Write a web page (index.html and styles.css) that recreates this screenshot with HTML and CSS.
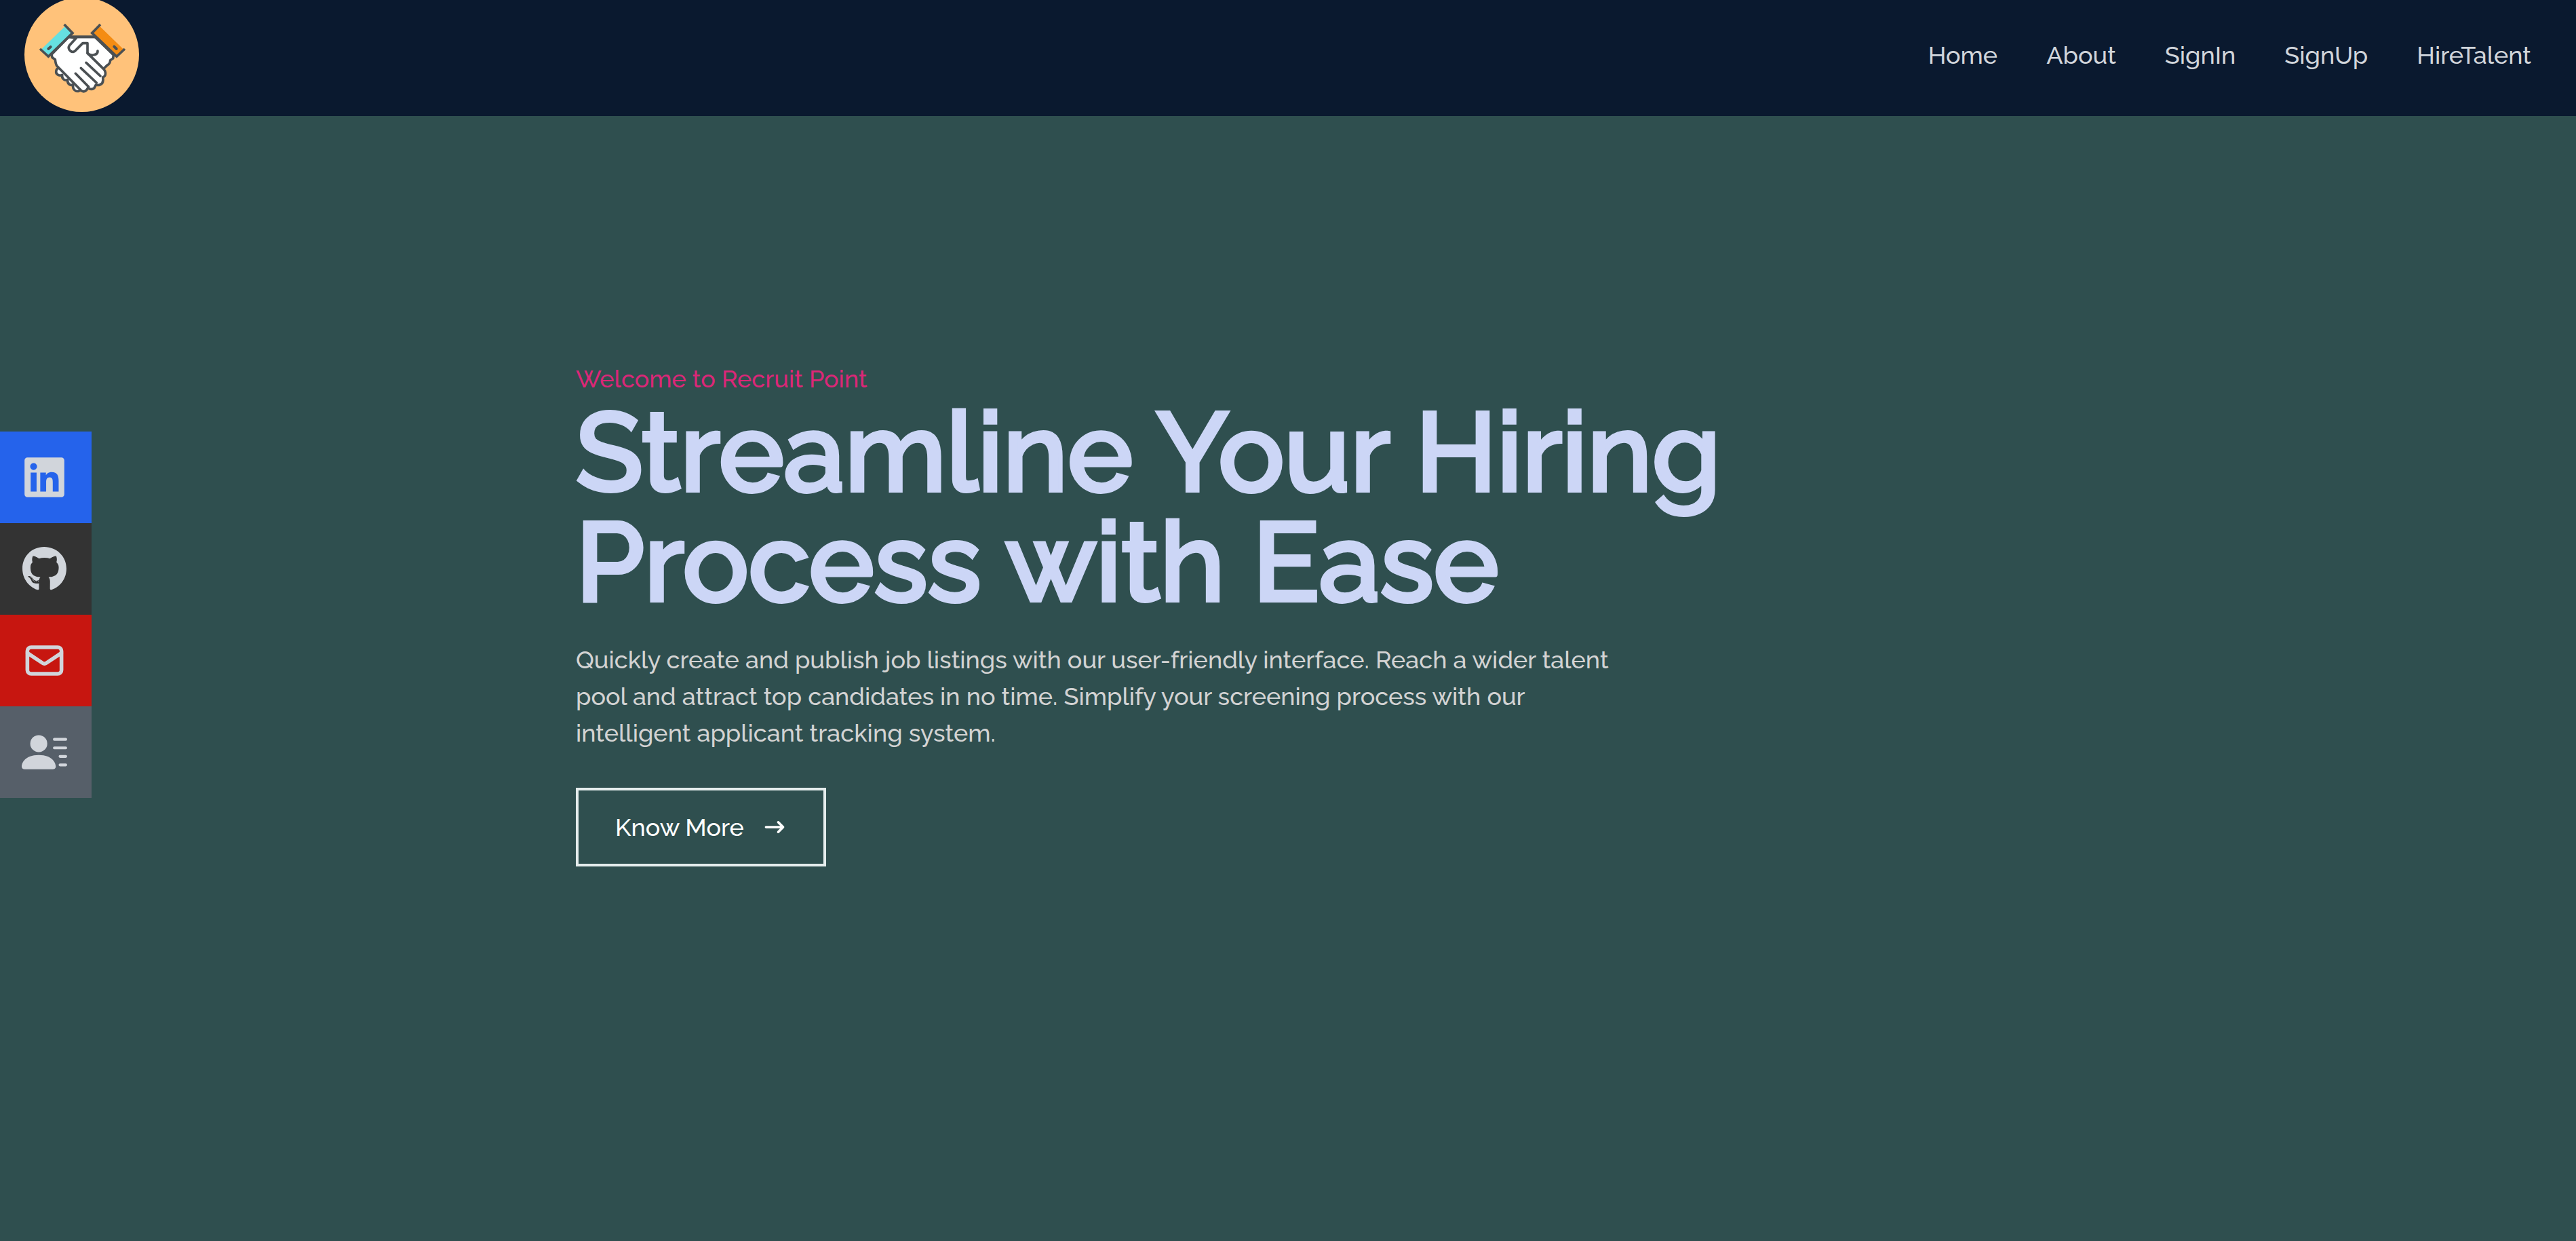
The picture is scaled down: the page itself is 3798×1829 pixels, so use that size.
FILE: index.html
```html
<!DOCTYPE html>
<html lang="en">
<head>
<meta charset="utf-8">
<meta name="viewport" content="width=device-width, initial-scale=1">
<title>Recruit Point</title>
<link rel="stylesheet" href="styles.css">
</head>
<body>
<header class="header">
  <a class="logo" href="#home" aria-label="Recruit Point">
    <svg viewBox="108 -12 507 507" aria-hidden="true">
      <circle cx="361.500" cy="241.500" r="253.500" fill="#ffc27a"/>
      <g stroke="#4b5053" stroke-width="11" stroke-linejoin="round" stroke-linecap="round">
        <g fill="#fff">
          <path d="M262 300 C246 302 243 325 257 331 C265 335 272 333 275 331 C272 348 287 359 299 352 C297 370 310 380 323 374 C320 394 333 406 347 403 L357 399 L372 380 L290 290 Z"/>
          <path d="M304 163 H420 L502 243 L500 258 L488 266 Q486 284 476 287 L459 303 L390 300 L270 230 Z"/>
          <path d="M304 163 L228 241 L231 254 L244 263 Q246 284 252 292 L357 398 Q370 411 383 398 L389 388 Q402 400 417 389 L424 375 Q440 380 452 368 Q458 358 455 342 Q469 336 466 320 Q465 313 458 305 L387 235 V191 H366 L337 220 Q325 236 311 225 Q299 214 307 201 L337 168 Z"/>
        </g>
        <path fill="none" d="M387 235 Q397 246 414 243 Q433 240 432 225 M381 277 L444 336 M358 301 L427 366 M334 325 L392 384"/>
        <path fill="none" stroke-linecap="butt" d="M304 163 H424"/>
      </g>
      <path fill="#66e0e1" d="M290 114 L322 146 L214 249 L182 219 Z"/>
      <path fill="#f48c13" d="M439 114 L547 219 L516 249 L406 146 Z"/>
      <path fill="none" stroke="#4b5053" stroke-width="11" stroke-linejoin="miter" d="M284 108 L321 146 L214 250 L177 216 M444 108 L407 146 L516 250 L552 216"/>
      <path fill="none" stroke="#4b5053" stroke-width="12" stroke-linecap="round" d="M214 216 L224 207 M505 206 L515 216"/>
    </svg>
  </a>
  <nav class="nav">
    <a href="#home">Home</a>
    <a href="#about">About</a>
    <a href="#signin">SignIn</a>
    <a href="#signup">SignUp</a>
    <a href="#hire">HireTalent</a>
  </nav>
</header>
<main class="main" id="home">
  <section class="hero">
    <p class="eyebrow">Welcome to Recruit Point</p>
    <h1 class="title">Streamline Your Hiring<br>Process with Ease</h1>
    <p class="lead">Quickly create and publish job listings with our user-friendly interface. Reach a wider talent pool and attract top candidates in no time. Simplify your screening process with our intelligent applicant tracking system.</p>
    <button class="more" type="button">Know More
      <svg viewBox="0 0 20 20" fill="currentColor" aria-hidden="true"><path fill-rule="evenodd" clip-rule="evenodd" d="M12.293 5.293a1 1 0 011.414 0l4 4a1 1 0 010 1.414l-4 4a1 1 0 01-1.414-1.414L14.586 11H3a1 1 0 110-2h11.586l-2.293-2.293a1 1 0 010-1.414z"/></svg>
    </button>
  </section>
  <aside class="social">
    <a class="linkedin" href="#linkedin" aria-label="LinkedIn">
      <svg viewBox="-32 0 512 512" fill="currentColor"><path d="M416 32H31.900C14.300 32 0 46.500 0 64.300v383.400C0 465.500 14.300 480 31.900 480H416c17.600 0 32-14.500 32-32.300V64.300c0-17.800-14.400-32.300-32-32.300zM135.400 416H69V202.200h66.500V416zm-33.200-243c-21.300 0-38.500-17.300-38.500-38.500S80.900 96 102.200 96c21.200 0 38.500 17.300 38.500 38.500 0 21.300-17.200 38.500-38.500 38.500zm282.100 243h-66.400V312c0-24.800-.5-56.700-34.500-56.700-34.600 0-39.900 27-39.900 54.900V416h-66.400V202.200h63.700v29.200h.9c8.900-16.800 30.600-34.500 62.900-34.500 67.200 0 79.700 44.300 79.700 101.900V416z"/></svg>
    </a>
    <a class="github" href="#github" aria-label="GitHub">
      <svg viewBox="-8 0 512 512" fill="currentColor"><path d="M165.900 397.400c0 2-2.300 3.600-5.200 3.600-3.300.3-5.600-1.300-5.600-3.600 0-2 2.300-3.600 5.200-3.600 3-.3 5.600 1.300 5.600 3.600zm-31.100-4.500c-.7 2 1.300 4.300 4.300 4.900 2.600 1 5.600 0 6.200-2s-1.300-4.300-4.300-5.200c-2.600-.7-5.500.3-6.200 2.300zm44.200-1.700c-2.900.7-4.900 2.600-4.600 4.900.3 2 2.900 3.300 5.900 2.600 2.900-.7 4.900-2.600 4.600-4.600-.3-1.900-3-3.200-5.900-2.900zM244.800 8C106.100 8 0 113.300 0 252c0 110.900 69.800 205.800 169.500 239.200 12.800 2.300 17.300-5.600 17.300-12.100 0-6.200-.3-40.400-.3-61.400 0 0-70 15-84.700-29.800 0 0-11.400-29.100-27.800-36.600 0 0-22.900-15.700 1.600-15.400 0 0 24.900 2 38.600 25.800 21.900 38.600 58.600 27.500 72.900 20.900 2.300-16 8.800-27.100 16-33.700-55.900-6.200-112.300-14.300-112.300-110.500 0-27.500 7.600-41.300 23.600-58.900-2.600-6.500-11.100-33.300 2.600-67.900 20.900-6.500 69 27 69 27 20-5.600 41.500-8.500 62.800-8.500s42.800 2.900 62.800 8.500c0 0 48.100-33.600 69-27 13.700 34.700 5.200 61.400 2.600 67.900 16 17.700 25.800 31.500 25.800 58.900 0 96.500-58.900 104.200-114.800 110.500 9.200 7.900 17 22.900 17 46.400 0 33.700-.3 75.400-.3 83.600 0 6.500 4.600 14.400 17.300 12.100C428.200 457.800 496 362.900 496 252 496 113.300 383.500 8 244.800 8zM97.200 352.900c-1.300 1-1 3.300.7 5.200 1.600 1.600 3.900 2.300 5.200 1 1.300-1 1-3.300-.7-5.200-1.600-1.600-3.900-2.300-5.200-1zm-10.800-8.100c-.7 1.300.3 2.900 2.300 3.900 1.600 1 3.600.7 4.300-.7.7-1.300-.3-2.900-2.300-3.900-2-.6-3.600-.3-4.300.7zm32.400 35.600c-1.600 1.300-1 4.300 1.300 6.200 2.300 2.300 5.200 2.600 6.500 1 1.300-1.300.7-4.300-1.300-6.200-2.200-2.300-5.200-2.600-6.500-1zm-11.400-14.700c-1.600 1-1.600 3.600 0 5.900 1.600 2.300 4.300 3.300 5.600 2.300 1.600-1.300 1.600-3.900 0-6.200-1.400-2.300-4-3.300-5.600-2z"/></svg>
    </a>
    <a class="mail" href="#mail" aria-label="Email">
      <svg viewBox="0 0 24 24" fill="none" stroke="currentColor" stroke-width="2" stroke-linecap="round" stroke-linejoin="round"><path d="M3 8l7.890 5.260a2 2 0 002.220 0L21 8M5 19h14a2 2 0 002-2V7a2 2 0 00-2-2H5a2 2 0 00-2 2v10a2 2 0 002 2z"/></svg>
    </a>
    <a class="resume" href="#resume" aria-label="Resume">
      <svg viewBox="0 0 16 16" fill="currentColor"><path d="M6 8a3 3 0 1 0 0-6 3 3 0 0 0 0 6zm-5 6s-1 0-1-1 1-4 6-4 6 3 6 4-1 1-1 1H1zM11 3.500a.5.5 0 0 1 .5-.5h4a.5.5 0 0 1 0 1h-4a.5.5 0 0 1-.5-.5zm.5 2.500a.5.5 0 0 0 0 1h4a.5.5 0 0 0 0-1h-4zm2 3a.5.5 0 0 0 0 1h2a.5.5 0 0 0 0-1h-2zm0 3a.5.5 0 0 0 0 1h2a.5.5 0 0 0 0-1h-2z"/></svg>
    </a>
  </aside>
</main>
</body>
</html>
```
FILE: styles.css
```css
* {
  box-sizing: border-box;
  margin: 0;
  padding: 0;
}

body {
  background: #2f4f4f;
  color: #d1d5db;
  font-family: Raleway, Lato, sans-serif;
  font-size: 36px;
  font-weight: 500;
  line-height: 54px;
}

a {
  color: inherit;
  text-decoration: none;
}

svg {
  display: block;
}

.header {
  display: flex;
  align-items: center;
  justify-content: space-between;
  height: 171px;
  padding: 0 66px 10px 36px;
  background: #0a192f;
}

.logo svg {
  width: 169px;
  height: 169px;
}

.nav {
  display: flex;
  gap: 72px;
}

.main {
  display: grid;
  align-items: center;
  min-height: calc(100vh - 171px);
  padding-bottom: 189px;
}

.hero,
.social {
  grid-area: 1 / 1;
}

.hero {
  width: 100%;
  max-width: 2100px;
  margin: 0 auto;
  padding-bottom: 4px;
}

.eyebrow {
  color: #db2777;
}

/* The medium cut thickened by an outline, so the letters keep its narrower set */
.title {
  color: #ccd6f6;
  font-size: 162px;
  font-weight: 500;
  line-height: 162px;
  -webkit-text-stroke: 6px #ccd6f6;
}

.lead {
  max-width: 1575px;
  padding: 36px 0 54px;
  color: #d3d3d3;
}

.more {
  display: flex;
  align-items: center;
  gap: 27px;
  padding: 27px 54px;
  border: 4px solid #e5eded;
  background: transparent;
  color: #fff;
  font: inherit;
}

.more svg {
  width: 36px;
  height: 36px;
}

.social {
  justify-self: start;
  width: 135px;
}

.social a {
  display: flex;
  align-items: center;
  height: 135px;
  padding-left: 32px;
}

.social svg {
  width: 67px;
  height: 67px;
}

.linkedin {
  background: #2563eb;
}

.github {
  background: #333333;
}

.mail {
  background: #c71610;
}

.resume {
  background: #565f69;
}
```
